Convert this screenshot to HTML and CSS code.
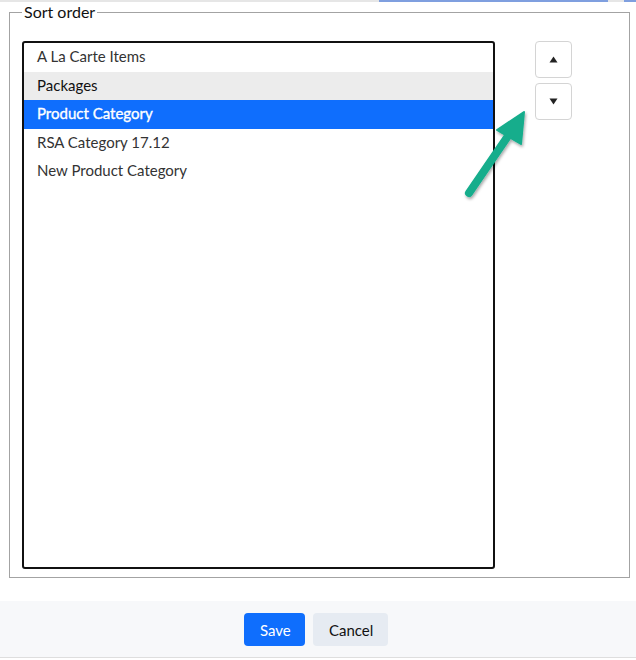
FILE: index.html
```html
<!DOCTYPE html>
<html>
<head>
<meta charset="utf-8">
<link rel="stylesheet" href="styles.css">
</head>
<body>
<div class="top-strip"><span class="cut-link cut-link-a"></span><span class="cut-link cut-link-b"></span></div>
<fieldset class="sort-fieldset">
  <legend>Sort order</legend>
  <div class="sort-row">
    <ul class="listbox">
      <li class="option">A La Carte Items</li>
      <li class="option option-hover">Packages</li>
      <li class="option option-selected">Product Category</li>
      <li class="option">RSA Category 17.12</li>
      <li class="option">New Product Category</li>
    </ul>
    <div class="movers">
      <button class="mover" aria-label="Move up"><svg width="9" height="7" viewBox="0 0 9 7"><path d="M4.5 0.5 L8.5 6.5 L0.5 6.5 Z" fill="#222"/></svg></button>
      <button class="mover" aria-label="Move down"><svg width="9" height="7" viewBox="0 0 9 7"><path d="M0.5 0.5 L8.5 0.5 L4.5 6.5 Z" fill="#222"/></svg></button>
    </div>
  </div>
</fieldset>
<footer class="actions">
  <button class="btn btn-primary">Save</button>
  <button class="btn btn-light">Cancel</button>
</footer>
<svg class="callout-arrow" width="636" height="660" viewBox="0 0 636 660">
  <defs>
    <filter id="sh" x="-50%" y="-50%" width="200%" height="200%">
      <feDropShadow dx="1" dy="2" stdDeviation="1.5" flood-color="#000" flood-opacity="0.35"/>
    </filter>
  </defs>
  <g filter="url(#sh)">
    <line x1="469" y1="193" x2="508" y2="136" stroke="#13ad8c" stroke-width="8" stroke-linecap="round"/>
    <path d="M524 112 L497 130 L521 144 Z" fill="#13ad8c" stroke="#13ad8c" stroke-width="2" stroke-linejoin="round"/>
  </g>
</svg>
</body>
</html>
```
FILE: styles.css
```css
html, body {
  margin: 0;
  padding: 0;
  background: #fff;
  font-family: "Lato", "Open Sans", sans-serif;
  color: #222;
}
body {
  width: 636px;
  height: 660px;
  overflow: hidden;
  position: relative;
}
.top-strip {
  height: 2px;
  background: #e6e6e6;
  display: flex;
}
.cut-link {
  height: 2px;
  background: #7f9fdf;
}
.cut-link-a {
  margin-left: 379px;
  width: 229px;
}
.cut-link-b {
  margin-left: 16px;
  width: 12px;
}
.sort-fieldset {
  margin: 0 6px 0 9px;
  padding: 19px 12px 8px 12px;
  border: 1px solid #a3a3a3;
  box-sizing: border-box;
}
.sort-fieldset legend {
  padding: 0 2px;
  font-size: 16px;
  line-height: 20px;
  color: #111;
}
.sort-row {
  display: flex;
  align-items: flex-start;
  gap: 40px;
}
.listbox {
  list-style: none;
  margin: 0;
  padding: 0;
  width: 473px;
  height: 528px;
  box-sizing: border-box;
  border: 2px solid #111;
  border-radius: 3px;
  overflow: hidden;
}
.option {
  height: 28.6px;
  line-height: 27.6px;
  padding: 0 13px;
  font-size: 15px;
  color: #333;
}
.option-hover {
  background: #ececec;
  color: #111;
}
.option-selected {
  background: #0f6efd;
  color: #fff;
  -webkit-text-stroke: 0.35px #fff;
}
.movers {
  display: flex;
  flex-direction: column;
  gap: 5px;
}
.mover {
  width: 37px;
  height: 37px;
  box-sizing: border-box;
  border: 1px solid #d4d4d4;
  border-radius: 4px;
  background: #fff;
  display: flex;
  align-items: center;
  justify-content: center;
  padding: 0;
}
.actions {
  margin-top: 23px;
  height: 57px;
  box-sizing: border-box;
  background: #f7f8fa;
  border-bottom: 1px solid #dedede;
  display: flex;
  justify-content: center;
  align-items: flex-start;
  padding-top: 12px;
  padding-right: 4px;
  gap: 8px;
}
.btn {
  height: 33px;
  border: none;
  border-radius: 4px;
  font-family: "Lato", "Open Sans", sans-serif;
  font-size: 15px;
  padding: 0 16px;
}
.btn-primary {
  background: #0f6efd;
  color: #fff;
  width: 61px;
}
.btn-light {
  background: #e6ebf2;
  color: #111;
  width: 75px;
}
.callout-arrow {
  position: absolute;
  left: 0;
  top: 0;
  pointer-events: none;
}
```
